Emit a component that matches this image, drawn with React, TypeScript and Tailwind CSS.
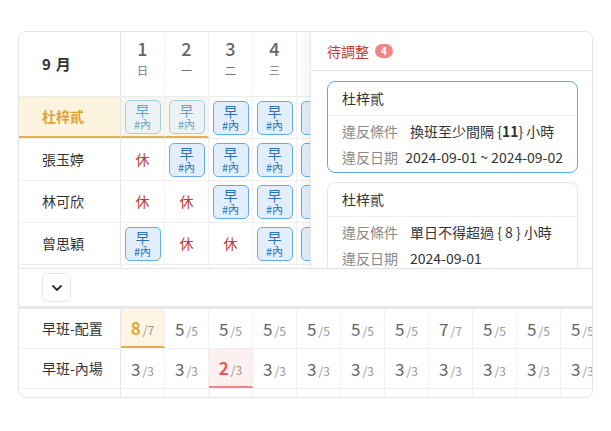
import { ChevronDown } from "lucide-react"
import clsx from "clsx"

const days = [
  { d: 1, w: "日" },
  { d: 2, w: "一" },
  { d: 3, w: "二" },
  { d: 4, w: "三" },
  { d: 5, w: "四" },
  { d: 6, w: "五" },
  { d: 7, w: "六" },
  { d: 8, w: "日" },
  { d: 9, w: "一" },
  { d: 10, w: "二" },
  { d: 11, w: "三" },
]

// c = chip, f = faded chip, r = rest
const staff = [
  { name: "杜梓貳", active: true, shifts: "ffcccccccccc" },
  { name: "張玉婷", shifts: "rccccccccccc" },
  { name: "林可欣", shifts: "rrcccccccccc" },
  { name: "曾思穎", shifts: "crrccccccccc" },
  { name: "王小明", shifts: "cccccccccccc" },
]

const totals = [
  {
    label: "早班-配置",
    cells: [
      [8, 7],
      [5, 5],
      [5, 5],
      [5, 5],
      [5, 5],
      [5, 5],
      [5, 5],
      [7, 7],
      [5, 5],
      [5, 5],
      [5, 5],
    ],
  },
  {
    label: "早班-內場",
    cells: Array.from({ length: 11 }, (_, i) => (i === 2 ? [2, 3] : [3, 3])),
  },
  { label: "", cells: Array.from({ length: 11 }, () => [0, 0]) },
]

const Chip = ({ faded }: { faded?: boolean }) => (
  <div
    className={clsx(
      "w-[36px] h-[34px] rounded-[5px] border flex flex-col items-center justify-center leading-none",
      faded
        ? "border-[#a8cde6] bg-[#edf2f4] text-[#6d9fc3]"
        : "border-[#62acec] bg-[#e2eefb] text-[#2c73b4]"
    )}
  >
    <span className="text-[14px]">早</span>
    <span className="text-[11px] mt-[2px]">#內</span>
  </div>
)

const Violation = ({
  selected,
  rule,
  date,
}: {
  selected?: boolean
  rule: React.ReactNode
  date: string
}) => (
  <div
    className={clsx(
      "rounded-lg border bg-white shrink-0",
      selected ? "border-[#5eaaee]" : "border-[#e6e6e6]"
    )}
  >
    <div className="h-[34px] px-[14px] flex items-center border-b border-[#efefef] text-[14px] text-[#333]">
      杜梓貳
    </div>
    <div className="px-[14px] py-[2px] text-[14px] whitespace-nowrap">
      <div className="h-[26px] flex items-center">
        <span className="w-[68px] text-[#8a8a8a]">違反條件</span>
        <span className="text-[#333]">{rule}</span>
      </div>
      <div className="h-[26px] flex items-center">
        <span className="w-[68px] text-[#8a8a8a]">違反日期</span>
        <span className="text-[#333]">{date}</span>
      </div>
    </div>
  </div>
)

const App = () => {
  return (
    <div className="w-[611px] h-[431px] bg-white pt-[31px] pl-[18px] font-['Noto_Sans_CJK_TC','Noto_Sans',sans-serif]">
      <div className="relative w-[575px] h-[367px] rounded-lg border border-[#e5e5e5] overflow-hidden">
        {/* schedule grid */}
        <div className="h-[237px] overflow-hidden border-b border-[#e8e8e8]">
          <div className="flex h-[65px] border-b border-[#ececec]">
            <div className="w-[102px] shrink-0 border-r border-[#e6e6e6] pl-[23px] flex items-center text-[15px] font-bold text-[#333]">
              <span>9</span>
              <span className="ml-[5px]">月</span>
            </div>
            {days.map((day) => (
              <div
                key={day.d}
                className="w-[44px] shrink-0 border-r border-[#f0f0f0] flex flex-col items-center pt-[5px]"
              >
                <span className="text-[18px] leading-[22px] font-medium text-[#666]">{day.d}</span>
                <span className="text-[11px] leading-[14px] mt-[4px] text-[#777]">{day.w}</span>
              </div>
            ))}
          </div>
          {staff.map((s) => (
            <div key={s.name} className="flex h-[42px] border-b border-[#efefef]">
              <div
                className={clsx(
                  "w-[102px] shrink-0 border-r border-[#e6e6e6] pl-[23px] flex items-center text-[14px]",
                  s.active
                    ? "bg-[#fcf4df] text-[#e3a235] font-bold border-b-2 border-b-[#e8b04a]"
                    : "text-[#333]"
                )}
              >
                {s.name}
              </div>
              {days.map((day, i) => {
                const k = s.shifts[i]
                const hl = s.active && i < 2
                return (
                  <div
                    key={day.d}
                    className={clsx(
                      "w-[44px] shrink-0 border-r border-[#f0f0f0] flex items-center justify-center",
                      hl && "bg-[#f8f5ec] border-b-2 border-b-[#e8b04a]"
                    )}
                  >
                    {k === "r" ? (
                      <span className="text-[14px] text-[#c23a32]">休</span>
                    ) : (
                      <Chip faded={k === "f"} />
                    )}
                  </div>
                )
              })}
            </div>
          ))}
        </div>

        {/* collapse toggle */}
        <div className="h-[37px] flex items-center pl-[23px]">
          <button className="w-[29px] h-[29px] rounded-md border border-[#e6e6e6] flex items-center justify-center text-[#333]">
            <ChevronDown size={16} strokeWidth={2.8} />
          </button>
        </div>

        {/* totals */}
        <div className="border-t-[3px] border-[#e8e8e8]">
          {totals.map((row, r) => (
            <div key={r} className="flex h-[40px] border-b border-[#efefef]">
              <div className="w-[102px] shrink-0 border-r border-[#e6e6e6] pl-[23px] flex items-center text-[14px] text-[#333]">
                {row.label}
              </div>
              {row.cells.map(([v, t], i) => {
                const over = r === 0 && i === 0
                const under = r === 1 && i === 2
                return (
                  <div
                    key={i}
                    className={clsx(
                      "w-[44px] shrink-0 border-r border-[#f0f0f0] flex items-center justify-center",
                      over && "bg-[#fbf5e2] border-b-2 border-b-[#e8b04a]",
                      under && "bg-[#fcf0f0] border-b-2 border-b-[#f08585]"
                    )}
                  >
                    {row.label && (
                      <span className="flex items-baseline">
                        <span
                          className={clsx(
                            "text-[17px]",
                            over
                              ? "text-[#e6a43a] font-bold"
                              : under
                              ? "text-[#e85a55] font-bold"
                              : "text-[#666]"
                          )}
                        >
                          {v}
                        </span>
                        <span className="text-[12px] text-[#999] ml-[2px]">/{t}</span>
                      </span>
                    )}
                  </div>
                )
              })}
            </div>
          ))}
        </div>

        {/* pending panel */}
        <div className="absolute top-0 right-0 w-[282px] h-[236px] bg-white border-l border-[#e8e8e8] shadow-[-4px_0_10px_rgba(0,0,0,0.05)] flex flex-col overflow-hidden">
          <div className="h-[39px] shrink-0 border-b border-[#e8e8e8] pl-[16px] flex items-center gap-[6px]">
            <span className="text-[14px] text-[#c53a33]">待調整</span>
            <span className="h-[14px] min-w-[18px] px-[5px] rounded-full bg-[#ef8585] text-white text-[10px] font-bold flex items-center justify-center leading-none">
              4
            </span>
          </div>
          <div className="pl-[16px] pr-[14px] pt-[10px] flex flex-col gap-[9px]">
            <Violation
              selected
              rule={
                <>
                  換班至少間隔 {"{"}
                  <b className="font-bold">11</b>
                  {"}"} 小時
                </>
              }
              date="2024-09-01 ~ 2024-09-02"
            />
            <Violation rule={<>單日不得超過 {"{ 8 }"} 小時</>} date="2024-09-01" />
          </div>
        </div>
      </div>
    </div>
  )
}

export default App
